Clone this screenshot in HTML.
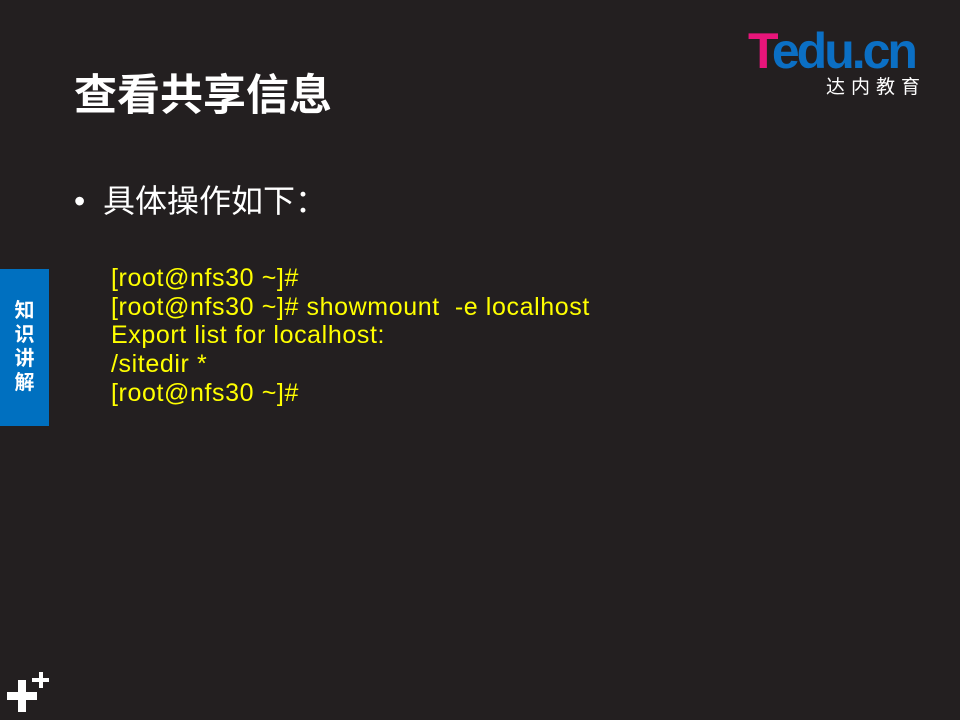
<!DOCTYPE html>
<html><head><meta charset="utf-8"><style>
body{margin:0;width:960px;height:720px;background:#231f20;position:relative;overflow:hidden;font-family:"Liberation Sans","Noto Sans CJK SC",sans-serif}
.t{position:absolute;left:74px;top:70px;color:#fff;font-size:43px;font-weight:bold;line-height:52px}
.b{position:absolute;left:74px;top:180px;color:#fff;font-size:32px;line-height:42px}
.c{position:absolute;left:111px;top:264px;color:#ffff00;font-size:25px;letter-spacing:0.6px;line-height:28.7px;white-space:pre}
.tab{position:absolute;left:0;top:269px;width:49px;height:157px;background:#0070c0;color:#fff;font-weight:bold;font-size:20px;line-height:24px;text-align:center;padding-top:28px;box-sizing:border-box;font-family:"Noto Sans CJK SC",sans-serif}
.logo{position:absolute;left:748px;top:26px;font-size:50px;font-weight:bold;letter-spacing:-3px;line-height:50px}
.sub{position:absolute;left:826px;top:74px;color:#fff;font-size:19px;letter-spacing:6px;font-family:"Noto Sans CJK SC",sans-serif;line-height:24px}
.p{position:absolute;background:#fff}
</style></head><body>
<div class="logo"><span style="color:#e8157a">T</span><span style="color:#0b6fc4">edu.cn</span></div>
<div class="sub">达内教育</div>
<div class="t">查看共享信息</div>
<div class="b">•&nbsp;&nbsp;具体操作如下：</div>
<div class="c">[root@nfs30 ~]#
[root@nfs30 ~]# showmount  -e localhost
Export list for localhost:
/sitedir *
[root@nfs30 ~]#</div>
<div class="tab">知<br>识<br>讲<br>解</div>
<div class="p" style="left:7px;top:692px;width:30px;height:8px"></div>
<div class="p" style="left:18px;top:680px;width:8px;height:32px"></div>
<div class="p" style="left:32px;top:678px;width:17px;height:4px"></div>
<div class="p" style="left:38.5px;top:672px;width:4px;height:16px"></div>
</body></html>
